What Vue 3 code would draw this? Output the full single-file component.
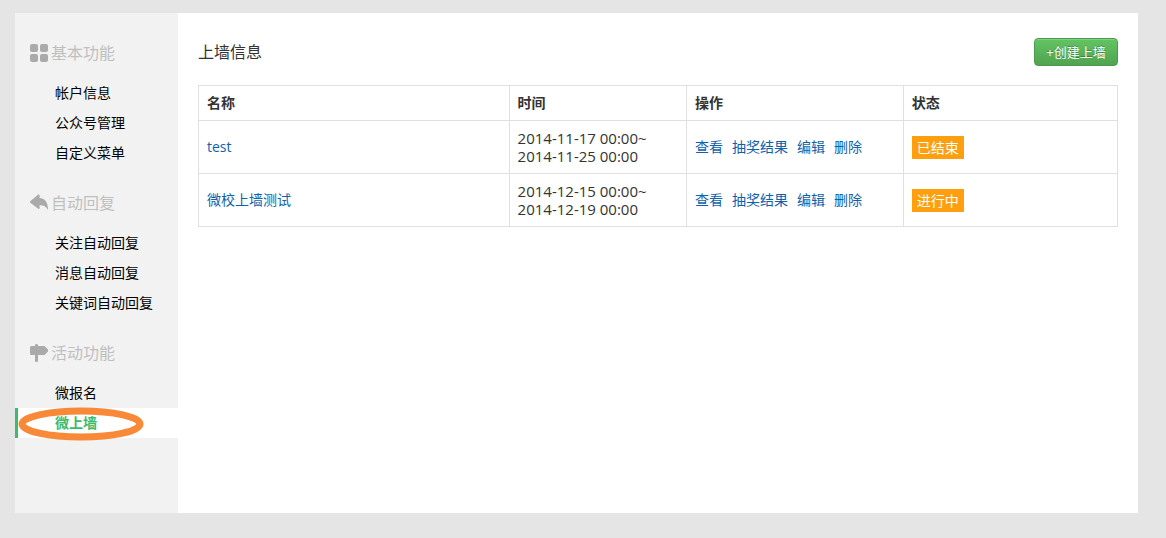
<script setup>
const groups = [
  { title: '基本功能', icon: 'grid', items: ['帐户信息', '公众号管理', '自定义菜单'] },
  { title: '自动回复', icon: 'reply', items: ['关注自动回复', '消息自动回复', '关键词自动回复'] },
  { title: '活动功能', icon: 'sign', items: ['微报名', '微上墙'] }
]
const active = '微上墙'
const rows = [
  { name: 'test', start: '2014-11-17 00:00~', end: '2014-11-25 00:00', status: '已结束' },
  { name: '微校上墙测试', start: '2014-12-15 00:00~', end: '2014-12-19 00:00', status: '进行中' }
]
const actions = ['查看', '抽奖结果', '编辑', '删除']
</script>

<template>
  <div class="page">
    <div class="panel">
      <nav class="sidebar">
        <section v-for="g in groups" :key="g.title" class="group">
          <h2 class="group-title">
            <svg class="icon" viewBox="0 0 18 18" aria-hidden="true">
              <template v-if="g.icon === 'grid'">
                <rect x="0" y="0" width="8" height="8" rx="2" />
                <rect x="10" y="0" width="8" height="8" rx="2" />
                <rect x="0" y="10" width="8" height="8" rx="2" />
                <rect x="10" y="10" width="8" height="8" rx="2" />
              </template>
              <path
                v-else-if="g.icon === 'reply'"
                d="M0 7.400 L8.200 .600 Q9.400 0 9.600 1.200 V4 C14.600 4.200 18.200 8 18 16 C16.200 12.400 13.600 11.200 9.600 11.200 V14.200 Q9.400 15.400 8.200 14.800 L0 8.400 Z"
              />
              <path
                v-else
                d="M5 2 V1 Q5 0 6.500 0 Q8 0 8 1 V2 H14.500 L18 5.500 V7.500 L14.500 11 H8 V17 Q8 18 6.500 18 Q5 18 5 17 V11 H1.500 Q0 11 0 9.500 V3.500 Q0 2 1.500 2 Z"
              />
            </svg>
            <span>{{ g.title }}</span>
          </h2>
          <ul class="menu">
            <li v-for="item in g.items" :key="item">
              <a href="#" class="menu-link" :class="{ active: item === active }">
                {{ item }}
                <svg v-if="item === active" class="ring" viewBox="0 0 126 34" aria-hidden="true">
                  <ellipse cx="63" cy="17" rx="59" ry="13" />
                </svg>
              </a>
            </li>
          </ul>
        </section>
      </nav>
      <main class="content">
        <header class="head">
          <h1>上墙信息</h1>
          <button type="button" class="create">+创建上墙</button>
        </header>
        <table>
          <colgroup>
            <col class="c-name" />
            <col class="c-time" />
            <col class="c-action" />
            <col />
          </colgroup>
          <thead>
            <tr>
              <th>名称</th>
              <th>时间</th>
              <th>操作</th>
              <th>状态</th>
            </tr>
          </thead>
          <tbody>
            <tr v-for="r in rows" :key="r.name">
              <td><a href="#">{{ r.name }}</a></td>
              <td class="time">{{ r.start }}<br />{{ r.end }}</td>
              <td>
                <div class="actions">
                  <a v-for="a in actions" :key="a" href="#">{{ a }}</a>
                </div>
              </td>
              <td><div class="badge">{{ r.status }}</div></td>
            </tr>
          </tbody>
        </table>
      </main>
    </div>
  </div>
</template>

<style>
body {
  background: #e5e5e5;
}
</style>

<style scoped>
.page {
  box-sizing: border-box;
  min-height: 100vh;
  padding: 13px 28px 25px 15px;
  display: flex;
  font-family: "Open Sans", "Noto Sans CJK SC", sans-serif;
  font-size: 14px;
  line-height: 18px;
  color: #333;
}
.panel {
  flex: 1;
  display: flex;
  background: #fff;
}
.sidebar {
  flex: 0 0 163px;
  box-sizing: border-box;
  padding-top: 25px;
  background: #f2f2f2;
}
.group {
  margin-bottom: 20px;
}
.group-title {
  display: flex;
  align-items: center;
  gap: 3px;
  margin: 0 0 10px;
  padding-left: 15px;
  font-size: 16px;
  font-weight: 400;
  line-height: 30px;
  color: #bfbfbf;
}
.icon {
  width: 18px;
  height: 18px;
  fill: #aaa;
}
.menu {
  margin: 0;
  padding: 0;
  list-style: none;
}
.menu-link {
  position: relative;
  display: block;
  padding-left: 37px;
  border-left: 3px solid transparent;
  line-height: 30px;
  color: #000;
  text-decoration: none;
}
.menu-link.active {
  border-left-color: #3dbb6b;
  background: #fff;
  color: #3dbb6b;
  font-weight: 700;
}
.ring {
  position: absolute;
  left: 0;
  top: -1px;
  width: 126px;
  height: 34px;
  fill: none;
  stroke: #f88938;
  stroke-width: 7px;
  pointer-events: none;
}
.content {
  flex: 1;
  min-width: 0;
  padding: 25px 20px;
}
.head {
  display: flex;
  align-items: center;
  justify-content: space-between;
  margin-bottom: 19px;
}
h1 {
  margin: 0;
  font-size: 16px;
  font-weight: 400;
  line-height: 28px;
}
.create {
  min-width: 84px;
  height: 28px;
  padding: 0 10px;
  border: 1px solid #4a9c4a;
  border-radius: 4px;
  background: linear-gradient(#62c462, #51a351);
  box-shadow: inset 0 1px 0 rgba(255, 255, 255, 0.2);
  font-family: inherit;
  font-size: 13px;
  line-height: 18px;
  color: #fff;
  text-shadow: 0 -1px 0 rgba(0, 0, 0, 0.25);
}
table {
  width: 100%;
  table-layout: fixed;
  border-collapse: collapse;
}
.c-name {
  width: 33.8%;
}
.c-time {
  width: 19.3%;
}
.c-action {
  width: 23.6%;
}
th,
td {
  padding: 8px;
  border: 1px solid #e0e0e0;
  text-align: left;
  vertical-align: middle;
}
.time {
  font-size: 15px;
}
td a {
  color: #0e62ad;
  text-decoration: none;
}
.actions {
  display: flex;
  gap: 9px;
  white-space: nowrap;
}
.badge {
  width: fit-content;
  padding: 0 5px;
  background: #ff9f0f;
  line-height: 23px;
  color: #fff;
}
</style>
